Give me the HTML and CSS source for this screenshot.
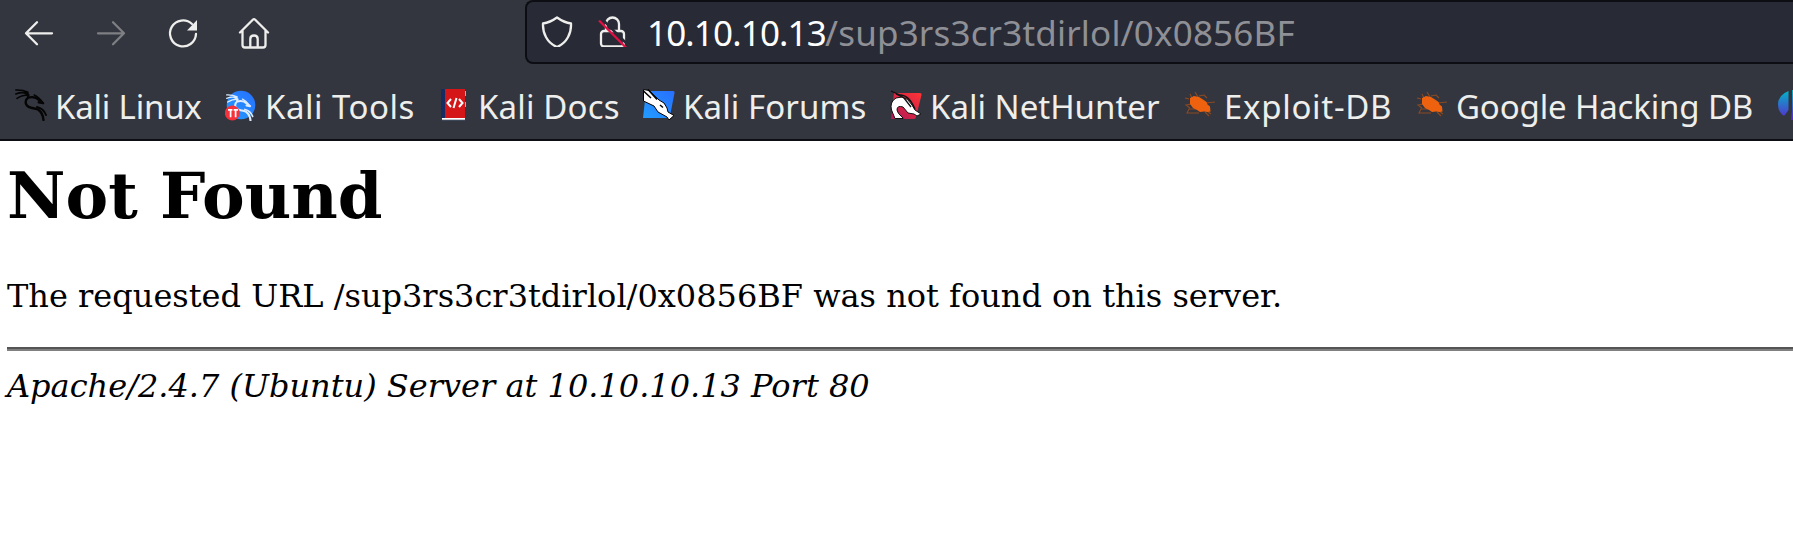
FILE: index.html
```html
<!DOCTYPE html>
<html lang="en">
<head>
<meta charset="utf-8">
<title>404 Not Found</title>
<link rel="stylesheet" href="styles.css">
</head>
<body>
<svg class="defs" width="0" height="0" aria-hidden="true">
  <defs>
    <linearGradient id="blue" x1="0" y1="1" x2="1" y2="0"><stop offset="0" stop-color="#229cff"/><stop offset="1" stop-color="#286fff"/></linearGradient>
    <linearGradient id="red" x1="0" y1="1" x2="1" y2="0"><stop offset="0" stop-color="#b01857"/><stop offset="1" stop-color="#ff3434"/></linearGradient>
    <linearGradient id="off" x1="0" y1="0" x2="0" y2="1"><stop offset="0" stop-color="#00b8c8"/><stop offset="1" stop-color="#5b24cf"/></linearGradient>
    <g id="dragon" fill="none" stroke="currentColor" stroke-linecap="round" stroke-linejoin="round">
      <path stroke-width="1.6" d="M.8 1Q8 .8 13 3.2M.8 5Q7 2.5 13 4.500M2 9.300Q7 6 14 6M19.200 6Q24.500 8.500 28 14.200"/>
      <path stroke-width="2.4" d="M10 3.500 13 6.500V8.700Q20 6.800 24 11l4 3.200-4.200-.9M13 8.700Q9.800 11 11 15c2 5 8 3.500 12 5.500Q28 24 28.500 31"/>
      <path stroke-width="2" d="M22 18Q28.500 19.500 31 26"/>
    </g>
    <g id="bug">
      <path fill="none" stroke="#c8560f" stroke-width="1.1" opacity=".6" d="M8 9 6 5M5 10 1 9M7 15l-5 1 4 3M12 20H5L3 24H15M14 8l-3-5M15 7l5-1 3 3M22 14l9-1M21 23l4 4M23 22l4 3"/>
      <path fill="#ee620f" d="M6 9 10 7l5 1 4 2.500 3.500 2.500 1 2.500 2.500 2 .5 5-3 .5-3.500-.5-4 .5-3-2-4-2-3-4z"/>
    </g>
  </defs>
</svg>
<header class="chrome">
  <div class="toolbar">
    <nav class="nav">
      <svg class="nav-icon" viewBox="0 0 32 32"><path d="M29 16.300H3M14 5.300 3 16.300l11 11"/></svg>
      <svg class="nav-icon dim" viewBox="0 0 32 32"><path d="M3 16.300h26M18 5.300l11 11-11 11"/></svg>
      <svg class="nav-icon" viewBox="0 0 32 32"><path d="M29 17A13 13 0 1 1 25 7"/><path class="solid" d="M30 3v10.500H20z"/></svg>
      <svg class="nav-icon home" viewBox="0 0 32 32"><path d="M2 15.500 14.800 2.700q1.200-1.200 2.400 0L30 15.500M4.500 13.500V28q0 2.500 2.500 2.500h18q2.500 0 2.500-2.500V13.500M12.300 30V22q0-3.500 3.700-3.500t3.700 3.500v8"/></svg>
    </nav>
    <div class="urlbar">
      <svg class="url-icon" viewBox="0 0 32 32"><path d="M16 2.500Q23 7.500 30 8.500C30.500 18 26 28 16 32 6 28 1.500 18 2 8.500Q9 7.500 16 2.500z"/></svg>
      <svg class="url-icon" viewBox="0 0 32 32"><path d="M9 16V9a6.500 6.500 0 0 1 13 0V16"/><rect x="4" y="16" width="23" height="15.500" rx="3"/><path class="gap" d="M4 3l26 26"/><path class="slash" d="M2 5.500l27 27"/></svg>
      <div class="address"><span class="host">10.10.10.13</span><span class="path">/sup3rs3cr3tdirlol/0x0856BF</span></div>
    </div>
  </div>
  <div class="bookmarks">
    <div class="bookmark linux"><svg class="favicon black" viewBox="0 0 32 32"><use href="#dragon"/></svg><span>Kali Linux</span></div>
    <div class="bookmark tools"><svg class="favicon white" viewBox="0 0 32 32"><circle cx="16" cy="16" r="14.300" fill="url(#blue)"/><g transform="translate(1 5) scale(.86)"><use href="#dragon"/></g><circle cx="7.300" cy="24" r="7.500" fill="#f5323b"/><path d="M3 20.800h4.400M5.600 20.800v7.400M8.600 20.800H13M10.600 20.800v7.400" fill="none" stroke="#fff" stroke-width="1.700"/></svg><span>Kali Tools</span></div>
    <div class="bookmark docs"><svg class="favicon" viewBox="0 0 32 32"><path fill="#142c62" d="M3 0h5v29H3z"/><path fill="#d51619" d="M7 0h20v29H7z"/><path fill="#3b4659" d="M4 29h23v3H4z"/><path fill="#fff" d="M4 29h23v1.700H4z"/><path stroke="#ffa63a" d="M27.500 2v5M27.500 13v5"/><path fill="none" stroke="#fff" stroke-width="2" d="M13 10l-3.500 4 3.500 4M21 10l3.500 4-3.500 4M18.500 9l-3 10"/></svg><span>Kali Docs</span></div>
    <div class="bookmark forums"><svg class="favicon" viewBox="0 0 32 32"><path fill="url(#blue)" d="M3 2h27q2 0 1.500 2L27 27q-.4 2-2 2H0z"/><path fill="#fff" stroke="#000" d="M.5.500 6 1.500l10 9.500 5 3 3 5 1 4 6 3.500-5 4.500-2-3-9-5-4-6L.5 12z"/><path fill="none" stroke="#000" stroke-width="1.500" d="M.5 2 8 9M5 .500l9 10M17 16l3 2.500"/></svg><span>Kali Forums</span></div>
    <div class="bookmark hunter"><svg class="favicon" viewBox="0 0 32 32"><path fill="url(#red)" d="M4 4h26q2 0 1.500 2L26 28q-.5 2-2 2H1z"/><path fill="#fff" stroke="#111" d="M13 29.500H5L1.500 21Q-.5 13 6 9l6-1q6 1 10 8l3 5 6 4-4 2-3-2-6-1-5-6q-6-2-6 3 0 3 6 8z"/><path fill="none" stroke="#111" stroke-width="1.300" d="M1 2l9 4q9 0 15 14M6 5l8 4 7 9"/></svg><span>Kali NetHunter</span></div>
    <div class="bookmark exploit"><svg class="favicon" viewBox="0 0 32 32"><use href="#bug"/></svg><span>Exploit-DB</span></div>
    <div class="bookmark hacking"><svg class="favicon" viewBox="0 0 32 32"><use href="#bug"/></svg><span>Google Hacking DB</span></div>
    <div class="bookmark offsec"><svg class="favicon" viewBox="0 0 32 32"><path fill="url(#off)" d="M11.500 2v19L7 27Q1 23 1 15.500 1 6 11.500 2zM15 1h8v30h-9l1-9z"/></svg></div>
  </div>
</header>
<main class="page">
  <h1>Not Found</h1>
  <p>The requested URL /sup3rs3cr3tdirlol/0x0856BF was not found on this server.</p>
  <hr>
  <address>Apache/2.4.7 (Ubuntu) Server at 10.10.10.13 Port 80</address>
</main>
</body>
</html>
```
FILE: styles.css
```css
* { box-sizing: border-box; }
body { margin: 0; height: 546px; overflow: hidden; background: #fff; color: #000; }
.defs { display: block; }
.chrome { height: 141px; overflow: hidden; background: #33363e; border-bottom: 2px solid #0d0e13; font-family: "Noto Sans", sans-serif; }
.toolbar { display: flex; height: 64px; }
.nav { display: flex; flex: none; gap: 40px; width: 525px; padding: 17px 0 0 23px; }
.nav-icon, .url-icon { flex: none; width: 32px; height: 32px; fill: none; stroke: #eeeeec; stroke-width: 2.3; stroke-linecap: round; stroke-linejoin: round; }
.dim { stroke: #7e7f83; }
.home { margin-left: -1px; }
.nav-icon .solid { fill: #eeeeec; stroke: none; }
.urlbar { display: flex; flex: 1; gap: 24px; height: 64px; padding: 13px 0 0 14px; background: #282a36; border: 2px solid #0d0e13; border-right: 0; border-radius: 8px 0 0 8px; }
.url-icon .gap { stroke: #282a36; stroke-width: 2.5; }
.url-icon .slash { stroke: #e40f43; stroke-linecap: butt; }
.address { display: flex; height: 36px; line-height: 36px; font-size: 35px; white-space: nowrap; }
.host { color: #fff; width: 178px; margin-left: -6px; letter-spacing: -0.85px; }
.path { color: #8f9096; letter-spacing: 0.18px; }
.bookmarks { display: flex; height: 75px; padding: 25px 0 0 15px; }
.bookmark { display: flex; flex: none; gap: 8px; height: 36px; color: #eeeeec; font-size: 33px; line-height: 36px; white-space: nowrap; }
.favicon { flex: none; width: 32px; height: 32px; }
.black { color: #050505; }
.white { color: #dcecff; }
.linux { width: 210px; letter-spacing: -0.2px; }
.tools { width: 213px; letter-spacing: 0.5px; }
.docs { width: 205px; letter-spacing: 0.15px; }
.forums { width: 247px; letter-spacing: 0.1px; }
.hunter { width: 294px; letter-spacing: 0; }
.exploit { width: 232px; letter-spacing: 0.7px; }
.hacking { width: 361px; letter-spacing: -0.15px; }
.page { padding: 18px 0 0 7px; font-family: "DejaVu Serif", serif; font-size: 32px; line-height: 38px; }
h1 { margin: 0; font-size: 64px; line-height: 74px; }
p { margin: 44px 0 32px; }
hr { height: 4px; margin: 0; border: 0; border-top: 2px solid #555; background: #808080; }
address { margin-top: 16px; }
```
